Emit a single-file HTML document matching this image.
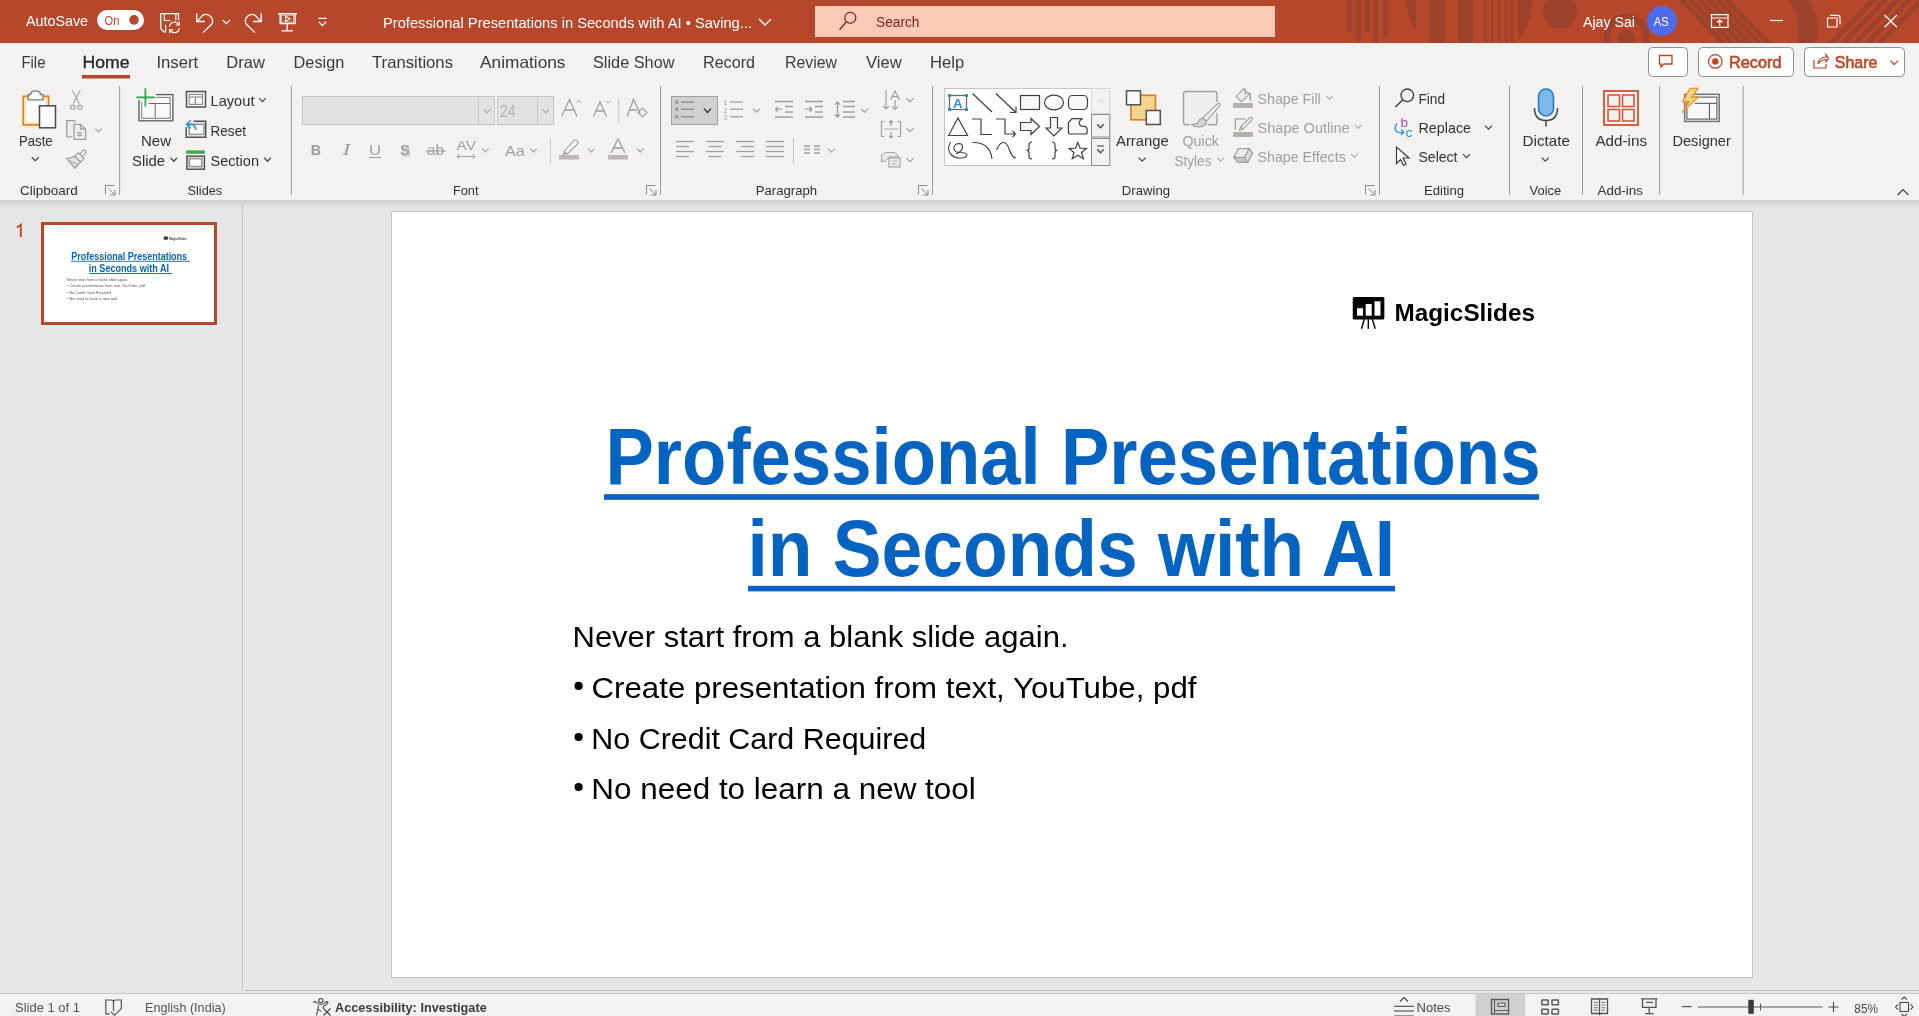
<!DOCTYPE html>
<html><head><meta charset="utf-8"><style>
html,body{margin:0;padding:0;width:1919px;height:1016px;overflow:hidden;background:#E6E6E6;}
svg{display:block;font-family:"Liberation Sans", sans-serif;will-change:transform;}
</style></head><body>
<svg width="1919" height="1016" viewBox="0 0 1919 1016">
<rect x="0" y="0" width="1919" height="1016" fill="#E6E6E6" stroke="none" stroke-width="1" rx="0"/>
<rect x="0" y="0" width="1919" height="43" fill="#B7472A" stroke="none" stroke-width="1" rx="0"/>
<rect x="0" y="43" width="1919" height="157" fill="#F3F2F1" stroke="none" stroke-width="1" rx="0"/>
<defs><linearGradient id="sh" x1="0" y1="0" x2="0" y2="1"><stop offset="0" stop-color="#CDCDCD"/><stop offset="0.5" stop-color="#DCDCDC"/><stop offset="1" stop-color="#E6E6E6"/></linearGradient></defs>
<rect x="0" y="200" width="1919" height="10" fill="url(#sh)" stroke="none" stroke-width="1" rx="0"/>
<rect x="0" y="993" width="1919" height="23" fill="#F3F2F1" stroke="none" stroke-width="1" rx="0"/>
<line x1="0" y1="993.5" x2="1919" y2="993.5" stroke="#C6C6C6" stroke-width="1"/>
<line x1="245" y1="990.5" x2="1919" y2="990.5" stroke="#BEBEBE" stroke-width="1"/>
<line x1="242.5" y1="203" x2="242.5" y2="990" stroke="#C8C8C8" stroke-width="1"/>
<rect x="1347" y="0" width="5" height="32" fill="#9E432B" stroke="none" stroke-width="1" rx="0"/>
<rect x="1356" y="0" width="5" height="41" fill="#9E432B" stroke="none" stroke-width="1" rx="0"/>
<rect x="1365" y="0" width="5" height="32" fill="#9E432B" stroke="none" stroke-width="1" rx="0"/>
<rect x="1373" y="0" width="5" height="43" fill="#9E432B" stroke="none" stroke-width="1" rx="0"/>
<rect x="1383" y="0" width="5" height="37" fill="#9E432B" stroke="none" stroke-width="1" rx="0"/>
<path d="M1405 0 L1416 0 L1416 30 Q1407 15 1405 0 Z" fill="#9E432B" stroke="none" stroke-width="1"/>
<rect x="1429" y="0" width="16" height="43" fill="#9E432B" stroke="none" stroke-width="1" rx="0"/>
<rect x="1458" y="0" width="15" height="43" fill="#9E432B" stroke="none" stroke-width="1" rx="0"/>
<rect x="1484" y="0" width="2.5" height="43" fill="#9E432B" stroke="none" stroke-width="1" rx="0"/>
<rect x="1491" y="0" width="2.5" height="43" fill="#9E432B" stroke="none" stroke-width="1" rx="0"/>
<rect x="1498" y="0" width="2.5" height="43" fill="#9E432B" stroke="none" stroke-width="1" rx="0"/>
<rect x="1505" y="0" width="2.5" height="43" fill="#9E432B" stroke="none" stroke-width="1" rx="0"/>
<rect x="1511" y="0" width="2.5" height="43" fill="#9E432B" stroke="none" stroke-width="1" rx="0"/>
<path d="M1518 0 L1533 0 Q1530 25 1518 40 Z" fill="#9E432B" stroke="none" stroke-width="1"/>
<circle cx="1560" cy="11" r="17.5" fill="#9E432B" stroke="none" stroke-width="1"/>
<g fill="none" stroke="#9E432B">
<circle cx="1626.5" cy="36.5" r="19.8" stroke-width="6.5"/><circle cx="1626.5" cy="38.5" r="8.9" fill="#9E432B" stroke="none"/>
<path d="M1793 -10 Q1820 25 1800 60" stroke-width="18"/>
</g>
<g stroke="#9E432B" stroke-width="5">
<line x1="1680" y1="-2" x2="1725" y2="45"/>
<line x1="1689" y1="-2" x2="1734" y2="45"/>
<line x1="1698" y1="-2" x2="1743" y2="45"/>
<line x1="1707" y1="-2" x2="1752" y2="45"/>
<line x1="1716" y1="-2" x2="1761" y2="45"/>
<line x1="1725" y1="-2" x2="1770" y2="45"/>
<line x1="1875" y1="-2" x2="1830" y2="45"/>
<line x1="1887" y1="-2" x2="1842" y2="45"/>
<line x1="1899" y1="-2" x2="1854" y2="45"/>
<line x1="1911" y1="-2" x2="1866" y2="45"/>
<line x1="1923" y1="-2" x2="1878" y2="45"/>
</g>
<rect x="0" y="43" width="1919" height="157" fill="#F3F2F1" stroke="none" stroke-width="1" rx="0"/>
<text x="26" y="25.7" font-size="15" fill="#FFFFFF" font-weight="normal" text-anchor="start" textLength="62" lengthAdjust="spacingAndGlyphs">AutoSave</text>
<rect x="97" y="10" width="47" height="20" fill="#FFFFFF" stroke="none" stroke-width="1" rx="10"/>
<text x="104.5" y="24.8" font-size="12" fill="#B7472A" font-weight="normal" text-anchor="start" textLength="14.8" lengthAdjust="spacingAndGlyphs">On</text>
<circle cx="134" cy="19.9" r="4.8" fill="#B7472A" stroke="none" stroke-width="1"/>
<path d="M166 31.8 H163.8 L160.8 28.6 V13.6 H178.5 V20.2" fill="none" stroke="#FFFFFF" stroke-width="1.3"/>
<path d="M164.4 13.6 V20.5 H170.4 M175.8 13.6 V20.5 M165.6 24.7 V31.3" fill="none" stroke="#FFFFFF" stroke-width="1.2"/>
<path d="M169.6 26.5 A5 5 0 0 1 178.8 24.5 M179.2 28.3 A5 5 0 0 1 170 30.3" fill="none" stroke="#FFFFFF" stroke-width="1.2"/>
<path d="M179.2 21.5 V25 H175.7 M169.6 33.3 V29.8 H173.1" fill="none" stroke="#FFFFFF" stroke-width="1.2"/>
<path d="M196.7 13.2 V21.5 H204.8" fill="none" stroke="#FFFFFF" stroke-width="1.3"/>
<path d="M197.5 21 L202.6 15.4 A6.6 6.6 0 0 1 211.8 24 L202.9 32.6" fill="none" stroke="#FFFFFF" stroke-width="1.3"/>
<path d="M222.65 19.9 L226.3 23.6 L229.95000000000002 19.9" fill="none" stroke="#FFFFFF" stroke-width="1.2"/>
<path d="M261.2 13.2 V21.5 H253.1" fill="none" stroke="#FFFFFF" stroke-width="1.3"/>
<path d="M260.4 21 L255.3 15.4 A6.6 6.6 0 0 0 246.1 24 L255 32.6" fill="none" stroke="#FFFFFF" stroke-width="1.3"/>
<path d="M278.1 13.7 H296.9 M280.2 13.7 V23.5 H295.2 V13.7 M287.2 23.5 V30.9 M281.5 30.9 H293" fill="none" stroke="#FFFFFF" stroke-width="1.4"/>
<rect x="281.7" y="15.2" width="12" height="6.8" fill="none" stroke="#FFFFFF" stroke-width="0.6" rx="0"/>
<path d="M285.6 16.2 L290 18.8 L285.6 21.4 Z" fill="none" stroke="#FFFFFF" stroke-width="1.1"/>
<path d="M318 18.4 H326.8" fill="none" stroke="#FFFFFF" stroke-width="1.2"/>
<path d="M318.79999999999995 21.75 L322.4 25.65 L326.0 21.75" fill="none" stroke="#FFFFFF" stroke-width="1.2"/>
<text x="383" y="27.9" font-size="15.5" fill="#FFFFFF" font-weight="normal" text-anchor="start" textLength="369" lengthAdjust="spacingAndGlyphs">Professional Presentations in Seconds with AI  •  Saving...</text>
<path d="M759.0 19.0 L765 25.0 L771.0 19.0" fill="none" stroke="#FFFFFF" stroke-width="1.3"/>
<rect x="815" y="6" width="460" height="31" fill="#FCCAB6" stroke="none" stroke-width="1" rx="0"/>
<circle cx="850.3" cy="17.8" r="5.5" fill="none" stroke="#7A1F1A" stroke-width="1.2"/>
<line x1="846.2" y1="22" x2="839.5" y2="29.7" stroke="#7A1F1A" stroke-width="1.3"/>
<text x="876" y="27.3" font-size="15.5" fill="#7A1F1A" font-weight="normal" text-anchor="start" textLength="43.5" lengthAdjust="spacingAndGlyphs">Search</text>
<text x="1583" y="26.8" font-size="15.5" fill="#FFFFFF" font-weight="normal" text-anchor="start" textLength="52" lengthAdjust="spacingAndGlyphs">Ajay Sai</text>
<circle cx="1662" cy="21" r="15" fill="#4F6BED" stroke="none" stroke-width="1"/>
<text x="1653.8" y="25.6" font-size="12" fill="#FFFFFF" font-weight="normal" text-anchor="start" textLength="15" lengthAdjust="spacingAndGlyphs">AS</text>
<path d="M1711.5 14.6 H1728 V27.3 H1711.5 Z M1711.5 18 H1728 M1719.7 26 V20 M1717 22.5 L1719.7 20 L1722.5 22.5" fill="none" stroke="#FFFFFF" stroke-width="1.2"/>
<line x1="1770" y1="20.5" x2="1783" y2="20.5" stroke="#FFFFFF" stroke-width="1.2"/>
<path d="M1827.5 18 H1837 V27 H1827.5 Z M1830 15.3 H1837.5 Q1840 15.3 1840 18 V24.5" fill="none" stroke="#FFFFFF" stroke-width="1.2"/>
<path d="M1884.5 15 L1897 27.3 M1897 15 L1884.5 27.3" fill="none" stroke="#FFFFFF" stroke-width="1.3"/>
<text x="21.4" y="67.6" font-size="16.5" fill="#3B3A39" font-weight="normal" text-anchor="start" textLength="24.1" lengthAdjust="spacingAndGlyphs">File</text>
<text x="82.5" y="67.6" font-size="16.5" fill="#262626" font-weight="normal" text-anchor="start" textLength="47" lengthAdjust="spacingAndGlyphs" stroke="#262626" stroke-width="0.3">Home</text>
<text x="156.4" y="67.6" font-size="16.5" fill="#3B3A39" font-weight="normal" text-anchor="start" textLength="41.9" lengthAdjust="spacingAndGlyphs">Insert</text>
<text x="226.2" y="67.6" font-size="16.5" fill="#3B3A39" font-weight="normal" text-anchor="start" textLength="38.7" lengthAdjust="spacingAndGlyphs">Draw</text>
<text x="293.6" y="67.6" font-size="16.5" fill="#3B3A39" font-weight="normal" text-anchor="start" textLength="50.7" lengthAdjust="spacingAndGlyphs">Design</text>
<text x="372" y="67.6" font-size="16.5" fill="#3B3A39" font-weight="normal" text-anchor="start" textLength="81" lengthAdjust="spacingAndGlyphs">Transitions</text>
<text x="480" y="67.6" font-size="16.5" fill="#3B3A39" font-weight="normal" text-anchor="start" textLength="85.5" lengthAdjust="spacingAndGlyphs">Animations</text>
<text x="593" y="67.6" font-size="16.5" fill="#3B3A39" font-weight="normal" text-anchor="start" textLength="81.5" lengthAdjust="spacingAndGlyphs">Slide Show</text>
<text x="703" y="67.6" font-size="16.5" fill="#3B3A39" font-weight="normal" text-anchor="start" textLength="52" lengthAdjust="spacingAndGlyphs">Record</text>
<text x="785" y="67.6" font-size="16.5" fill="#3B3A39" font-weight="normal" text-anchor="start" textLength="52" lengthAdjust="spacingAndGlyphs">Review</text>
<text x="866" y="67.6" font-size="16.5" fill="#3B3A39" font-weight="normal" text-anchor="start" textLength="35.8" lengthAdjust="spacingAndGlyphs">View</text>
<text x="930" y="67.6" font-size="16.5" fill="#3B3A39" font-weight="normal" text-anchor="start" textLength="34.2" lengthAdjust="spacingAndGlyphs">Help</text>
<rect x="82" y="75" width="48" height="3.5" fill="#B7472A" stroke="none" stroke-width="1" rx="0"/>
<rect x="1648.5" y="47.5" width="39" height="29" fill="#FFFFFF" stroke="#8F8F8F" stroke-width="1" rx="4"/>
<path d="M1659.5 55.5 H1672 V64 H1664 L1661 67 V64 H1659.5 Z" fill="none" stroke="#C0431F" stroke-width="1.3"/>
<rect x="1698.5" y="47.5" width="95" height="29" fill="#FFFFFF" stroke="#8F8F8F" stroke-width="1" rx="4"/>
<circle cx="1715.3" cy="61.4" r="6.8" fill="none" stroke="#C0431F" stroke-width="1.2"/>
<circle cx="1715.3" cy="61.4" r="3.2" fill="#C0431F" stroke="none" stroke-width="1"/>
<text x="1729" y="67.6" font-size="17" fill="#C0431F" font-weight="normal" text-anchor="start" textLength="52.5" lengthAdjust="spacingAndGlyphs" stroke="#C0431F" stroke-width="0.6">Record</text>
<rect x="1804.5" y="47.5" width="100" height="29" fill="#FFFFFF" stroke="#8F8F8F" stroke-width="1" rx="4"/>
<path d="M1814 60 V68 H1826 V64 M1818 64 Q1819 57 1826 57 V54.5 L1828.5 58.5 L1826 62 V59.5 Q1821 59.5 1818 64" fill="none" stroke="#C0431F" stroke-width="1.2"/>
<text x="1834.8" y="67.6" font-size="17" fill="#C0431F" font-weight="normal" text-anchor="start" textLength="42.5" lengthAdjust="spacingAndGlyphs" stroke="#C0431F" stroke-width="0.6">Share</text>
<path d="M1890.45 60.6 L1894.2 64.6 L1897.95 60.6" fill="none" stroke="#C0431F" stroke-width="1.3"/>
<rect x="42.5" y="223.5" width="173" height="100" fill="#FFFFFF" stroke="#B7472A" stroke-width="3" rx="0"/>
<path d="M17 227.6 L20.8 224.8 V237" fill="none" stroke="#C4462A" stroke-width="1.9"/>
<rect x="391.5" y="211.5" width="1361" height="766" fill="#FFFFFF" stroke="#C6C6C6" stroke-width="1" rx="0"/>
<text x="605.5" y="484.2" font-size="79" fill="#0563C1" font-weight="bold" text-anchor="start" textLength="935" lengthAdjust="spacingAndGlyphs">Professional Presentations</text>
<rect x="604" y="494.2" width="935" height="5.6" fill="#0563C1" stroke="none" stroke-width="1" rx="0"/>
<text x="747.5" y="576" font-size="79" fill="#0563C1" font-weight="bold" text-anchor="start" textLength="647.5" lengthAdjust="spacingAndGlyphs">in Seconds with AI</text>
<rect x="748" y="585.8" width="647" height="5.6" fill="#0563C1" stroke="none" stroke-width="1" rx="0"/>
<text x="572.5" y="646.9" font-size="30" fill="#000000" font-weight="normal" text-anchor="start" textLength="496" lengthAdjust="spacingAndGlyphs">Never start from a blank slide again.</text>
<text x="591.5" y="697.9" font-size="30" fill="#000000" font-weight="normal" text-anchor="start" textLength="605" lengthAdjust="spacingAndGlyphs">Create presentation from text, YouTube, pdf</text>
<text x="591.3" y="748.8" font-size="30" fill="#000000" font-weight="normal" text-anchor="start" textLength="335" lengthAdjust="spacingAndGlyphs">No Credit Card Required</text>
<text x="591.3" y="798.7" font-size="30" fill="#000000" font-weight="normal" text-anchor="start" textLength="384.5" lengthAdjust="spacingAndGlyphs">No need to learn a new tool</text>
<circle cx="578.6" cy="685.9" r="4.1" fill="#000000" stroke="none" stroke-width="1"/>
<circle cx="578.6" cy="737" r="4.1" fill="#000000" stroke="none" stroke-width="1"/>
<circle cx="578.6" cy="787" r="4.1" fill="#000000" stroke="none" stroke-width="1"/>
<rect x="1352.75" y="296.9" width="31.6" height="22.5" fill="#000000" stroke="none" stroke-width="1" rx="1.5"/>
<rect x="1357" y="308.2" width="6" height="7.5" fill="#FFFFFF" stroke="none" stroke-width="1" rx="0"/>
<rect x="1365.7" y="304" width="6" height="11.7" fill="#FFFFFF" stroke="none" stroke-width="1" rx="0"/>
<rect x="1374.5" y="301.3" width="6" height="14.4" fill="#FFFFFF" stroke="none" stroke-width="1" rx="0"/>
<path d="M1364.3 319 L1361.5 328.7 M1368.3 319 V328.7 M1372.2 319 L1375.2 328.7" fill="none" stroke="#000000" stroke-width="1.4"/>
<text x="1394.5" y="321.3" font-size="24" fill="#000000" font-weight="bold" text-anchor="start" textLength="140.5" lengthAdjust="spacingAndGlyphs">MagicSlides</text>
<text x="71.3" y="259.8" font-size="10" fill="#0563C1" font-weight="bold" text-anchor="start" textLength="115.8" lengthAdjust="spacingAndGlyphs">Professional Presentations</text>
<rect x="71" y="260.8" width="119" height="0.9" fill="#0563C1" stroke="none" stroke-width="1" rx="0"/>
<text x="88.8" y="271.7" font-size="10" fill="#0563C1" font-weight="bold" text-anchor="start" textLength="80.2" lengthAdjust="spacingAndGlyphs">in Seconds with AI</text>
<rect x="89" y="273" width="83" height="0.9" fill="#0563C1" stroke="none" stroke-width="1" rx="0"/>
<text x="67" y="281" font-size="4" fill="#555555" font-weight="normal" text-anchor="start" textLength="61" lengthAdjust="spacingAndGlyphs">Never start from a blank slide again.</text>
<text x="67" y="287" font-size="4" fill="#555555" font-weight="normal" text-anchor="start" textLength="78" lengthAdjust="spacingAndGlyphs">• Create presentation from text, YouTube, pdf</text>
<text x="67" y="294" font-size="4" fill="#555555" font-weight="normal" text-anchor="start" textLength="44" lengthAdjust="spacingAndGlyphs">• No Credit Card Required</text>
<text x="67" y="300" font-size="4" fill="#555555" font-weight="normal" text-anchor="start" textLength="50" lengthAdjust="spacingAndGlyphs">• No need to learn a new tool</text>
<rect x="163.8" y="236.5" width="4" height="3.2" fill="#333" stroke="none" stroke-width="1" rx="0"/>
<text x="169" y="240.3" font-size="4.2" fill="#444" font-weight="bold" text-anchor="start" textLength="18" lengthAdjust="spacingAndGlyphs">MagicSlides</text>
<line x1="119.6" y1="86" x2="119.6" y2="195" stroke="#9C9A98" stroke-width="1"/>
<line x1="291.4" y1="86" x2="291.4" y2="195" stroke="#9C9A98" stroke-width="1"/>
<line x1="660.5" y1="86" x2="660.5" y2="195" stroke="#9C9A98" stroke-width="1"/>
<line x1="932.5" y1="86" x2="932.5" y2="195" stroke="#9C9A98" stroke-width="1"/>
<line x1="1379.5" y1="86" x2="1379.5" y2="195" stroke="#9C9A98" stroke-width="1"/>
<line x1="1509.5" y1="86" x2="1509.5" y2="195" stroke="#9C9A98" stroke-width="1"/>
<line x1="1582.5" y1="86" x2="1582.5" y2="195" stroke="#9C9A98" stroke-width="1"/>
<line x1="1659.6" y1="86" x2="1659.6" y2="195" stroke="#9C9A98" stroke-width="1"/>
<line x1="1743.2" y1="86" x2="1743.2" y2="195" stroke="#9C9A98" stroke-width="1"/>
<text x="19.9" y="194.8" font-size="13.2" fill="#323130" font-weight="normal" text-anchor="start" textLength="57.9" lengthAdjust="spacingAndGlyphs">Clipboard</text>
<text x="187.5" y="194.8" font-size="13.2" fill="#323130" font-weight="normal" text-anchor="start" textLength="34.7" lengthAdjust="spacingAndGlyphs">Slides</text>
<text x="452.9" y="194.8" font-size="13.2" fill="#323130" font-weight="normal" text-anchor="start" textLength="25.6" lengthAdjust="spacingAndGlyphs">Font</text>
<text x="755.8" y="194.8" font-size="13.2" fill="#323130" font-weight="normal" text-anchor="start" textLength="61.2" lengthAdjust="spacingAndGlyphs">Paragraph</text>
<text x="1121.8" y="194.8" font-size="13.2" fill="#323130" font-weight="normal" text-anchor="start" textLength="48.2" lengthAdjust="spacingAndGlyphs">Drawing</text>
<text x="1424.0" y="194.8" font-size="13.2" fill="#323130" font-weight="normal" text-anchor="start" textLength="40.0" lengthAdjust="spacingAndGlyphs">Editing</text>
<text x="1529.5" y="194.8" font-size="13.2" fill="#323130" font-weight="normal" text-anchor="start" textLength="31.7" lengthAdjust="spacingAndGlyphs">Voice</text>
<text x="1597.5" y="194.8" font-size="13.2" fill="#323130" font-weight="normal" text-anchor="start" textLength="45.4" lengthAdjust="spacingAndGlyphs">Add-ins</text>
<path d="M105.5 194.5 V185.5 H114.5 M108.5 188.5 L115.0 195.0 M110.0 195.0 H115.0 V190.0" fill="none" stroke="#8A8886" stroke-width="1"/>
<path d="M646.5 194.5 V185.5 H655.5 M649.5 188.5 L656.0 195.0 M651.0 195.0 H656.0 V190.0" fill="none" stroke="#8A8886" stroke-width="1"/>
<path d="M918.5 194.5 V185.5 H927.5 M921.5 188.5 L928.0 195.0 M923.0 195.0 H928.0 V190.0" fill="none" stroke="#8A8886" stroke-width="1"/>
<path d="M1365.5 194.5 V185.5 H1374.5 M1368.5 188.5 L1375.0 195.0 M1370.0 195.0 H1375.0 V190.0" fill="none" stroke="#8A8886" stroke-width="1"/>
<path d="M1897.5 195 L1903 189.5 L1908.5 195" fill="none" stroke="#444" stroke-width="1.2"/>
<rect x="23.2" y="96.3" width="25.3" height="28.6" fill="#FAFAFA" stroke="#E8841F" stroke-width="1.8" rx="0"/>
<rect x="25" y="98.1" width="21.7" height="25" fill="none" stroke="#F8D98F" stroke-width="1.2" rx="0"/>
<path d="M28.2 94.5 V99.8 H43 V94.5 H40.5 Q40.5 90.8 35.6 90.8 Q30.7 90.8 30.7 94.5 Z" fill="#FAFAFA" stroke="#7A7A7A" stroke-width="1.3"/>
<rect x="39.5" y="105.8" width="16" height="22" fill="#FAFAFA" stroke="#4A4A4A" stroke-width="1.5" rx="0"/>
<text x="19" y="145.7" font-size="14.8" fill="#323130" font-weight="normal" text-anchor="start" textLength="33.7" lengthAdjust="spacingAndGlyphs">Paste</text>
<path d="M31.799999999999997 157.25 L35.3 160.75 L38.8 157.25" fill="none" stroke="#444" stroke-width="1.2"/>
<path d="M72.5 90.2 L79.3 103.5 M80.2 90.2 L73.4 103.5" fill="none" stroke="#A19F9D" stroke-width="1.1"/>
<circle cx="72.8" cy="107.3" r="2.2" fill="none" stroke="#A19F9D" stroke-width="1.1"/>
<circle cx="79.9" cy="107.3" r="2.2" fill="none" stroke="#A19F9D" stroke-width="1.1"/>
<path d="M72.2 136.9 H66.8 V120.6 H74 L75.8 122.4" fill="#EDEDED" stroke="#A19F9D" stroke-width="1.3"/>
<path d="M74 124.3 H80.5 L85.6 129 V139.3 H74 Z M80.5 124.3 V129 H85.6 M77.2 133 H81.9 M77.2 135.5 H81.9" fill="#EDEDED" stroke="#A19F9D" stroke-width="1.3"/>
<path d="M95.25 128.65 L98.5 131.95000000000002 L101.75 128.65" fill="none" stroke="#A19F9D" stroke-width="1.1"/>
<path d="M82.8 150.6 Q84.6 149.4 85.8 150.8 Q86.8 152.3 85.2 153.6 L81.6 157.2 L79.3 154.9 Z" fill="#EDEDED" stroke="#A19F9D" stroke-width="1.2"/>
<path d="M74.9 156.4 L78.4 152.9 L84.1 158.6 L80.6 162.1 Z" fill="#EDEDED" stroke="#A19F9D" stroke-width="1.2"/>
<path d="M74.9 156.4 Q70.5 158.3 66.6 158.6 L74.9 168 L80.6 162.1 Z" fill="#E3E3E3" stroke="#A19F9D" stroke-width="1.2"/>
<path d="M68.3 160.4 L78.2 164.5" fill="none" stroke="#A19F9D" stroke-width="1"/>
<rect x="139" y="94.6" width="33.9" height="26.2" fill="#FAFAFA" stroke="#5A5A5A" stroke-width="1.3" rx="0"/>
<rect x="141.7" y="97.4" width="28.5" height="20.9" fill="none" stroke="#7A7A7A" stroke-width="1" rx="0"/>
<path d="M148.3 103.5 H170 M155.2 103.5 V118.3" fill="none" stroke="#6A6A6A" stroke-width="1"/>
<rect x="133.5" y="86" width="22.5" height="17" fill="#F3F2F1" stroke="none" stroke-width="1" rx="0"/>
<rect x="138.5" y="100" width="10" height="6" fill="#FAFAFA" stroke="none" stroke-width="1" rx="0"/>
<line x1="139" y1="100" x2="139" y2="106" stroke="#5A5A5A" stroke-width="1.3"/>
<line x1="141.7" y1="102" x2="141.7" y2="106" stroke="#7A7A7A" stroke-width="1"/>
<path d="M145.4 88.3 V106.5 M136.3 97.4 H154.8" fill="none" stroke="#2EA44F" stroke-width="1.7"/>
<text x="141" y="145.7" font-size="14.8" fill="#323130" font-weight="normal" text-anchor="start" textLength="30" lengthAdjust="spacingAndGlyphs">New</text>
<text x="132" y="165.8" font-size="14.8" fill="#323130" font-weight="normal" text-anchor="start" textLength="33" lengthAdjust="spacingAndGlyphs">Slide</text>
<path d="M170.55 157.75 L173.8 161.25 L177.05 157.75" fill="none" stroke="#444" stroke-width="1.2"/>
<rect x="186.5" y="91.5" width="19" height="15.5" fill="#F8F8F8" stroke="#505050" stroke-width="1.5" rx="0"/>
<path d="M189.2 94.4 H202.5 V104.4 H189.2 Z M189.2 97 H202.5 M195.3 97 V104.4" fill="none" stroke="#7A7A7A" stroke-width="1"/>
<text x="210.5" y="106.1" font-size="14.8" fill="#323130" font-weight="normal" text-anchor="start" textLength="44" lengthAdjust="spacingAndGlyphs">Layout</text>
<path d="M259.25 98.05 L262.5 101.55 L265.75 98.05" fill="none" stroke="#444" stroke-width="1.2"/>
<path d="M193.6 121.2 H205.7 V137.2 H186.2 V127" fill="none" stroke="#505050" stroke-width="1.5"/>
<rect x="189.2" y="124.2" width="14.8" height="10.2" fill="#FAFAFA" stroke="#9A9A9A" stroke-width="1.6" rx="0"/>
<path d="M190.7 120.3 L186.6 124.4 L190.7 128.5 M187.2 124.4 H191.5 Q195.7 124.4 195.7 130" fill="none" stroke="#2B8FD8" stroke-width="1.5"/>
<text x="210.5" y="136.2" font-size="14.8" fill="#323130" font-weight="normal" text-anchor="start" textLength="35.5" lengthAdjust="spacingAndGlyphs">Reset</text>
<rect x="186.2" y="150.4" width="18.7" height="3.4" fill="#3DAA4F" stroke="none" stroke-width="1" rx="0"/>
<rect x="186.9" y="156.2" width="17.5" height="13" fill="#FAFAFA" stroke="#454545" stroke-width="1.4" rx="0"/>
<rect x="189.3" y="158.6" width="12.5" height="8" fill="#FFFFFF" stroke="#9A9A9A" stroke-width="1.8" rx="0"/>
<text x="210.5" y="165.8" font-size="14.8" fill="#323130" font-weight="normal" text-anchor="start" textLength="48.5" lengthAdjust="spacingAndGlyphs">Section</text>
<path d="M264.25 157.75 L267.5 161.25 L270.75 157.75" fill="none" stroke="#444" stroke-width="1.2"/>
<rect x="302.5" y="96.5" width="192" height="28" fill="#E3E2E0" stroke="#C8C6C4" stroke-width="1" rx="0"/>
<line x1="478.5" y1="97" x2="478.5" y2="124" stroke="#C8C6C4" stroke-width="1"/>
<path d="M483.75 109.25 L487 112.75 L490.25 109.25" fill="none" stroke="#A19F9D" stroke-width="1.1"/>
<rect x="497.5" y="96.5" width="56" height="28" fill="#E3E2E0" stroke="#C8C6C4" stroke-width="1" rx="0"/>
<line x1="537.5" y1="97" x2="537.5" y2="124" stroke="#C8C6C4" stroke-width="1"/>
<path d="M542.55 109.25 L545.8 112.75 L549.05 109.25" fill="none" stroke="#A19F9D" stroke-width="1.1"/>
<text x="500" y="116.6" font-size="16" fill="#B3B0AD" font-weight="normal" text-anchor="start" textLength="15.7" lengthAdjust="spacingAndGlyphs">24</text>
<path d="M561.5 116.5 L569.5 99.5 L577 116.5 M564.5 110 H574.5" fill="none" stroke="#A19F9D" stroke-width="1.3"/>
<path d="M576.5 103 L579 100.5 L581.5 103" fill="none" stroke="#A19F9D" stroke-width="1"/>
<path d="M593.5 116.5 L600 102 L606.5 116.5 M596 111 H604" fill="none" stroke="#A19F9D" stroke-width="1.3"/>
<path d="M605.5 100.5 L608 103 L610.5 100.5" fill="none" stroke="#A19F9D" stroke-width="1"/>
<line x1="618.7" y1="97.5" x2="618.7" y2="123.5" stroke="#C8C6C4" stroke-width="1"/>
<path d="M627 116.5 L633.5 99.5 L640 113 M629.5 110 H637" fill="none" stroke="#A19F9D" stroke-width="1.3"/>
<path d="M638 112.5 L642.5 108 L647 112.5 L642.5 117 Z" fill="none" stroke="#A19F9D" stroke-width="1.2"/>
<text x="310.8" y="155.3" font-size="15.5" fill="#9A9896" font-weight="bold" text-anchor="start" textLength="10.2" lengthAdjust="spacingAndGlyphs">B</text>
<text x="342.5" y="155.3" font-size="16" fill="#A19F9D" font-weight="normal" text-anchor="start" textLength="8" lengthAdjust="spacingAndGlyphs" font-style="italic" font-family="Liberation Serif, serif">I</text>
<text x="369" y="155.3" font-size="15" fill="#A19F9D" font-weight="normal" text-anchor="start" textLength="12" lengthAdjust="spacingAndGlyphs">U</text>
<line x1="369" y1="157.5" x2="381" y2="157.5" stroke="#A19F9D" stroke-width="1.2"/>
<text x="401" y="156.5" font-size="15.5" fill="#D2D0CE" font-weight="bold" text-anchor="start" textLength="10" lengthAdjust="spacingAndGlyphs">S</text>
<text x="400" y="155.3" font-size="15.5" fill="#A19F9D" font-weight="bold" text-anchor="start" textLength="10" lengthAdjust="spacingAndGlyphs">S</text>
<text x="427" y="155.3" font-size="15" fill="#A19F9D" font-weight="normal" text-anchor="start" textLength="17" lengthAdjust="spacingAndGlyphs">ab</text>
<line x1="425.5" y1="151" x2="446" y2="151" stroke="#A19F9D" stroke-width="1.1"/>
<text x="456.5" y="150" font-size="13" fill="#A19F9D" font-weight="normal" text-anchor="start" textLength="19.5" lengthAdjust="spacingAndGlyphs">AV</text>
<path d="M457 156.5 H475 M459.5 154 L457 156.5 L459.5 159 M472.5 154 L475 156.5 L472.5 159" fill="none" stroke="#A19F9D" stroke-width="1"/>
<path d="M482.05 148.65 L485.3 151.95000000000002 L488.55 148.65" fill="none" stroke="#A19F9D" stroke-width="1.1"/>
<text x="505" y="156" font-size="15" fill="#A19F9D" font-weight="normal" text-anchor="start" textLength="19.7" lengthAdjust="spacingAndGlyphs">Aa</text>
<path d="M530.25 148.65 L533.5 151.95000000000002 L536.75 148.65" fill="none" stroke="#A19F9D" stroke-width="1.1"/>
<line x1="550.4" y1="137.5" x2="550.4" y2="163" stroke="#C8C6C4" stroke-width="1"/>
<rect x="559" y="155" width="20" height="4.5" fill="#BAB7B4" stroke="none" stroke-width="1" rx="0"/>
<path d="M564 151.5 L573.5 141 Q575.5 139 577.3 140.8 Q579 142.6 577 144.5 L567 154 Z" fill="#FFFFFF" stroke="#A19F9D" stroke-width="1.1"/>
<path d="M564 151.5 L567 154 L562.5 155 Z" fill="#A19F9D" stroke="none" stroke-width="1"/>
<path d="M588.05 148.65 L591.3 151.95000000000002 L594.55 148.65" fill="none" stroke="#A19F9D" stroke-width="1.1"/>
<rect x="608" y="155" width="20" height="4.5" fill="#BAB7B4" stroke="none" stroke-width="1" rx="0"/>
<path d="M611 153 L618 139 L625 153 M613.5 148 H622.5" fill="none" stroke="#A19F9D" stroke-width="1.3"/>
<path d="M637.05 148.65 L640.3 151.95000000000002 L643.55 148.65" fill="none" stroke="#A19F9D" stroke-width="1.1"/>
<rect x="671.5" y="96.5" width="46" height="28" fill="#D2D0CE" stroke="#A19F9D" stroke-width="1" rx="0"/>
<rect x="675" y="100.3" width="3.5" height="3.5" fill="#A19F9D" stroke="none" stroke-width="1" rx="0"/>
<line x1="681" y1="102" x2="694" y2="102" stroke="#8A8886" stroke-width="1.3"/>
<rect x="675" y="107.5" width="3.5" height="3.5" fill="#A19F9D" stroke="none" stroke-width="1" rx="0"/>
<line x1="681" y1="109.2" x2="694" y2="109.2" stroke="#8A8886" stroke-width="1.3"/>
<rect x="675" y="115.1" width="3.5" height="3.5" fill="#A19F9D" stroke="none" stroke-width="1" rx="0"/>
<line x1="681" y1="116.8" x2="694" y2="116.8" stroke="#8A8886" stroke-width="1.3"/>
<path d="M704.0 108.6 L707.5 112.4 L711.0 108.6" fill="none" stroke="#323130" stroke-width="1.4"/>
<text x="723.8" y="105.3" font-size="7" fill="#A19F9D" font-weight="normal" text-anchor="start" textLength="3.5" lengthAdjust="spacingAndGlyphs">1</text>
<line x1="730" y1="102" x2="743" y2="102" stroke="#A19F9D" stroke-width="1.3"/>
<text x="723.8" y="112.5" font-size="7" fill="#A19F9D" font-weight="normal" text-anchor="start" textLength="3.5" lengthAdjust="spacingAndGlyphs">2</text>
<line x1="730" y1="109.2" x2="743" y2="109.2" stroke="#A19F9D" stroke-width="1.3"/>
<text x="723.8" y="120.1" font-size="7" fill="#A19F9D" font-weight="normal" text-anchor="start" textLength="3.5" lengthAdjust="spacingAndGlyphs">3</text>
<line x1="730" y1="116.8" x2="743" y2="116.8" stroke="#A19F9D" stroke-width="1.3"/>
<path d="M753.0 108.75 L756.5 112.25 L760.0 108.75" fill="none" stroke="#A19F9D" stroke-width="1.1"/>
<path d="M775 101.5 H793 M785 106.5 H793 M785 112 H793 M775 117 H793 M782 109.2 H775.5 M778 106.7 L775.5 109.2 L778 111.7" fill="none" stroke="#A19F9D" stroke-width="1.3"/>
<path d="M805 101.5 H823 M815 106.5 H823 M815 112 H823 M805 117 H823 M805 109.2 H812 M809.5 106.7 L812 109.2 L809.5 111.7" fill="none" stroke="#A19F9D" stroke-width="1.3"/>
<path d="M843 101.5 H855 M843 106.5 H855 M843 112 H855 M843 117 H855 M837.5 102 V117 M835 104.5 L837.5 102 L840 104.5 M835 114.5 L837.5 117 L840 114.5" fill="none" stroke="#A19F9D" stroke-width="1.3"/>
<path d="M861.0 108.75 L864.5 112.25 L868.0 108.75" fill="none" stroke="#A19F9D" stroke-width="1.1"/>
<path d="M886 90 V109 M883 106 L886 109 L889 106 M895 100 V109.5 M892 106.5 L895 109.5 L898 106.5 M890.5 99.7 L895 91 L899.5 99.7 M892 96.7 H898" fill="none" stroke="#A19F9D" stroke-width="1.2"/>
<path d="M906.5 98.25 L910 101.75 L913.5 98.25" fill="none" stroke="#A19F9D" stroke-width="1.1"/>
<path d="M884.5 121.5 H881.5 V136.5 H884.5 M897.5 121.5 H900.5 V136.5 H897.5 M884 129 H898 M891 120.5 V126 M889 122.5 L891 120.5 L893 122.5 M891 132 V138 M889 136 L891 138 L893 136" fill="none" stroke="#A19F9D" stroke-width="1.2"/>
<path d="M906.5 128.25 L910 131.75 L913.5 128.25" fill="none" stroke="#A19F9D" stroke-width="1.1"/>
<path d="M881.5 155 L885.5 152.5 H895 L899 157 H889 L885 161.5 H881.5 Z" fill="#E8E8E8" stroke="#A19F9D" stroke-width="1"/>
<rect x="889" y="158" width="11" height="9" fill="#F0F0F0" stroke="#A19F9D" stroke-width="1.1" rx="0"/>
<path d="M891.5 161 H897.5 M891.5 164 H897.5" fill="none" stroke="#A19F9D" stroke-width="0.8"/>
<path d="M906.5 158.25 L910 161.75 L913.5 158.25" fill="none" stroke="#A19F9D" stroke-width="1.1"/>
<line x1="676" y1="141.5" x2="694" y2="141.5" stroke="#A19F9D" stroke-width="1.3"/>
<line x1="676" y1="146.5" x2="689" y2="146.5" stroke="#A19F9D" stroke-width="1.3"/>
<line x1="676" y1="151.5" x2="694" y2="151.5" stroke="#A19F9D" stroke-width="1.3"/>
<line x1="676" y1="156.5" x2="689" y2="156.5" stroke="#A19F9D" stroke-width="1.3"/>
<line x1="706.0" y1="141.5" x2="724.0" y2="141.5" stroke="#A19F9D" stroke-width="1.3"/>
<line x1="708.5" y1="146.5" x2="721.5" y2="146.5" stroke="#A19F9D" stroke-width="1.3"/>
<line x1="706.0" y1="151.5" x2="724.0" y2="151.5" stroke="#A19F9D" stroke-width="1.3"/>
<line x1="708.5" y1="156.5" x2="721.5" y2="156.5" stroke="#A19F9D" stroke-width="1.3"/>
<line x1="736" y1="141.5" x2="754" y2="141.5" stroke="#A19F9D" stroke-width="1.3"/>
<line x1="741" y1="146.5" x2="754" y2="146.5" stroke="#A19F9D" stroke-width="1.3"/>
<line x1="736" y1="151.5" x2="754" y2="151.5" stroke="#A19F9D" stroke-width="1.3"/>
<line x1="741" y1="156.5" x2="754" y2="156.5" stroke="#A19F9D" stroke-width="1.3"/>
<line x1="766" y1="141.5" x2="784" y2="141.5" stroke="#A19F9D" stroke-width="1.3"/>
<line x1="766" y1="146.5" x2="784" y2="146.5" stroke="#A19F9D" stroke-width="1.3"/>
<line x1="766" y1="151.5" x2="784" y2="151.5" stroke="#A19F9D" stroke-width="1.3"/>
<line x1="766" y1="156.5" x2="784" y2="156.5" stroke="#A19F9D" stroke-width="1.3"/>
<line x1="793.5" y1="137.5" x2="793.5" y2="164" stroke="#C8C6C4" stroke-width="1"/>
<path d="M804 146 H810 M804 149.5 H810 M804 153 H810 M814 146 H820 M814 149.5 H820 M814 153 H820" fill="none" stroke="#A19F9D" stroke-width="1.3"/>
<path d="M828.0 148.55 L831.5 152.05 L835.0 148.55" fill="none" stroke="#A19F9D" stroke-width="1.1"/>
<rect x="944.5" y="88.5" width="165" height="77" fill="#FFFFFF" stroke="#C8C6C4" stroke-width="1" rx="0"/>
<rect x="1091.5" y="88.5" width="18.3" height="25" fill="#F3F2F1" stroke="#D6D6D6" stroke-width="1" rx="0"/>
<path d="M1097.5 102.5 L1100.5 99.5 L1103.5 102.5" fill="none" stroke="#C8C6C4" stroke-width="1"/>
<rect x="1091.5" y="114.5" width="18.3" height="22.5" fill="#F3F2F1" stroke="#8A8A8A" stroke-width="1" rx="0"/>
<path d="M1097.25 124.25 L1100.5 127.75 L1103.75 124.25" fill="none" stroke="#444" stroke-width="1.2"/>
<rect x="1091.5" y="138.5" width="18.3" height="27" fill="#F3F2F1" stroke="#8A8A8A" stroke-width="1" rx="0"/>
<line x1="1097" y1="146" x2="1104" y2="146" stroke="#444" stroke-width="1"/>
<path d="M1097.25 149.25 L1100.5 152.75 L1103.75 149.25" fill="none" stroke="#444" stroke-width="1.2"/>
<rect x="949.5" y="95.5" width="17" height="14" fill="none" stroke="#6A6A6A" stroke-width="1.3" rx="0"/>
<rect x="948.0" y="94.0" width="3" height="3" fill="#2D8CDB" stroke="none" stroke-width="1" rx="0"/>
<rect x="965.0" y="94.0" width="3" height="3" fill="#2D8CDB" stroke="none" stroke-width="1" rx="0"/>
<rect x="948.0" y="108.0" width="3" height="3" fill="#2D8CDB" stroke="none" stroke-width="1" rx="0"/>
<rect x="965.0" y="108.0" width="3" height="3" fill="#2D8CDB" stroke="none" stroke-width="1" rx="0"/>
<text x="953" y="107.5" font-size="12.5" fill="#2D8CDB" font-weight="bold" text-anchor="start" textLength="9.5" lengthAdjust="spacingAndGlyphs">A</text>
<line x1="972.5" y1="93.5" x2="992" y2="112" stroke="#404040" stroke-width="1.2"/>
<path d="M996 93.5 L1016 112.5 M1010 112.5 H1016 V106.5" fill="none" stroke="#404040" stroke-width="1.2"/>
<rect x="1020.5" y="95.5" width="19" height="14" fill="#F7F7F7" stroke="#404040" stroke-width="1.2" rx="0"/>
<ellipse cx="1054" cy="102.5" rx="9.5" ry="7.3" fill="none" stroke="#404040" stroke-width="1.2"/>
<rect x="1068.5" y="95.5" width="19" height="14" fill="#F7F7F7" stroke="#404040" stroke-width="1.2" rx="4"/>
<path d="M948.5 135.5 L958 118 L967.5 135.5 Z" fill="none" stroke="#404040" stroke-width="1.2"/>
<path d="M972 119 H981 V134.5 H992" fill="none" stroke="#404040" stroke-width="1.2"/>
<path d="M996 119 H1005 V134 H1015.5 M1012.5 131 L1015.5 134 L1012.5 137" fill="none" stroke="#404040" stroke-width="1.2"/>
<path d="M1020.5 122.5 H1031 V118.5 L1039.5 126.5 L1031 134.5 V130.5 H1020.5 Z" fill="#F7F7F7" stroke="#404040" stroke-width="1.2"/>
<path d="M1050.5 117.5 H1057.5 V128 H1062 L1054 136 L1046 128 H1050.5 Z" fill="#F7F7F7" stroke="#404040" stroke-width="1.2"/>
<path d="M1070.4 134 Q1068.4 134 1068.4 132 V122.5 L1072.2 118.7 H1082.6 Q1078.8 120.5 1079.3 123.6 Q1080 126.4 1084 126.4 Q1087.2 126.6 1087.2 130 V132 Q1087.2 134 1085 134 Z" fill="#F7F7F7" stroke="#404040" stroke-width="1.2"/>
<path d="M950.5 142 Q946.5 150 951 154.5 Q955 158.5 961.5 158 Q967 157.5 967 155 Q966.5 152.5 960 152.5 Q954.5 152.5 954 148.5 Q954 144 958.5 143.5 Q963 143.5 962.5 147.5 Q962 151.5 956 154" fill="none" stroke="#404040" stroke-width="1.1"/>
<path d="M972.5 142.5 Q990 142 992 159" fill="none" stroke="#404040" stroke-width="1.2"/>
<path d="M996.5 150 Q999.5 142.5 1003.5 142.5 Q1007 142.5 1009.5 150 Q1012 157.5 1016 158" fill="none" stroke="#404040" stroke-width="1.2"/>
<path d="M1032 142 Q1029 142 1029 145 V148.5 Q1029 150.5 1026.5 150.5 Q1029 150.5 1029 152.5 V156 Q1029 159 1032 159" fill="none" stroke="#404040" stroke-width="1.2"/>
<path d="M1052 142 Q1055 142 1055 145 V148.5 Q1055 150.5 1057.5 150.5 Q1055 150.5 1055 152.5 V156 Q1055 159 1052 159" fill="none" stroke="#404040" stroke-width="1.2"/>
<path d="M1077.8 142.5 L1080.2 148.2 L1086.5 148.5 L1081.6 152.5 L1083.3 158.7 L1077.8 155.2 L1072.3 158.7 L1074 152.5 L1069.1 148.5 L1075.4 148.2 Z" fill="none" stroke="#404040" stroke-width="1.2"/>
<rect x="1131" y="95.3" width="24.5" height="24.5" fill="#F7D48E" stroke="#E07B24" stroke-width="1.6" rx="0"/>
<rect x="1126.5" y="90.8" width="14" height="14" fill="#F8F8F8" stroke="#505050" stroke-width="1.5" rx="0"/>
<rect x="1146.3" y="110.5" width="14" height="14" fill="#F8F8F8" stroke="#505050" stroke-width="1.5" rx="0"/>
<text x="1116" y="145.7" font-size="14.8" fill="#323130" font-weight="normal" text-anchor="start" textLength="52.7" lengthAdjust="spacingAndGlyphs">Arrange</text>
<path d="M1138.7 157.55 L1142.2 161.05 L1145.7 157.55" fill="none" stroke="#444" stroke-width="1.2"/>
<rect x="1183.5" y="91.5" width="33.5" height="33.2" fill="#EEEEEE" stroke="#9F9F9F" stroke-width="1.4" rx="2.5"/>
<rect x="1214" y="102" width="5" height="11" fill="#F3F2F1" stroke="none" stroke-width="1" rx="0"/>
<rect x="1189.5" y="122" width="18" height="4" fill="#F3F2F1" stroke="none" stroke-width="1" rx="0"/>
<path d="M1202.6 118.2 L1217.3 103.9 Q1220.3 102.3 1219.9 105.3 L1206.6 121.1 Z" fill="#F0F0F0" stroke="#9A9A9A" stroke-width="1.1"/>
<path d="M1202.6 118.2 Q1199.5 118.5 1198 122 Q1196.5 124.5 1191.5 124.4 Q1195 127.5 1200 127 Q1206 126.5 1206.6 121.1 Z" fill="#D4D4D4" stroke="#9A9A9A" stroke-width="1.1"/>
<text x="1182.5" y="145.7" font-size="14.8" fill="#A19F9D" font-weight="normal" text-anchor="start" textLength="36.5" lengthAdjust="spacingAndGlyphs">Quick</text>
<text x="1174.6" y="165.8" font-size="14.8" fill="#A19F9D" font-weight="normal" text-anchor="start" textLength="36.8" lengthAdjust="spacingAndGlyphs">Styles</text>
<path d="M1217.25 157.75 L1220.5 161.25 L1223.75 157.75" fill="none" stroke="#A19F9D" stroke-width="1.1"/>
<path d="M1236.2 96.4 L1243.5 88.9 L1249 94.3 L1241.5 101.8 Z" fill="#EDEDED" stroke="#A19F9D" stroke-width="1.1"/>
<path d="M1243.5 88.9 Q1245.5 88.2 1245.3 90.5 V95" fill="none" stroke="#A19F9D" stroke-width="1.2"/>
<path d="M1248.8 93 Q1250.8 93.5 1250.3 96 V100.5" fill="none" stroke="#A19F9D" stroke-width="1.5"/>
<rect x="1233.1" y="103" width="19.8" height="4.9" fill="#B3AFAB" stroke="none" stroke-width="1" rx="0"/>
<text x="1257.5" y="104.2" font-size="14.8" fill="#A19F9D" font-weight="normal" text-anchor="start" textLength="63.3" lengthAdjust="spacingAndGlyphs">Shape Fill</text>
<path d="M1326.25 95.75 L1329.5 99.25 L1332.75 95.75" fill="none" stroke="#A19F9D" stroke-width="1.1"/>
<path d="M1235.3 130 V118.8 H1245.6" fill="none" stroke="#A19F9D" stroke-width="1.3"/>
<path d="M1239.4 130.4 L1240.6 126.5 L1250 117.5 Q1251.7 116.5 1252.4 118.2 Q1252.8 119.5 1251.5 120.5 L1242.6 129.3 Z M1241 126.5 L1242.4 128.7" fill="#EDEDED" stroke="#A19F9D" stroke-width="1.1"/>
<rect x="1233.1" y="132" width="19.8" height="4.9" fill="#B3AFAB" stroke="none" stroke-width="1" rx="0"/>
<text x="1257.5" y="133" font-size="14.8" fill="#A19F9D" font-weight="normal" text-anchor="start" textLength="92.2" lengthAdjust="spacingAndGlyphs">Shape Outline</text>
<path d="M1355.05 124.75 L1358.3 128.25 L1361.55 124.75" fill="none" stroke="#A19F9D" stroke-width="1.1"/>
<path d="M1233.8 157.4 L1238.6 148.6 H1249.3 L1252.5 153.3 L1247.6 162.3 H1237.8 Z" fill="#C8C8C8" stroke="#A19F9D" stroke-width="1.2"/>
<path d="M1233.8 157.4 L1238.6 148.6 H1249.3 L1244.5 157.4 Z" fill="#EDEDED" stroke="#A19F9D" stroke-width="1.1"/>
<path d="M1244.5 157.4 L1249.3 148.6 L1252.5 153.3 L1247.6 162.3 Z" fill="#DADADA" stroke="#A19F9D" stroke-width="1.1"/>
<text x="1257.5" y="162" font-size="14.8" fill="#A19F9D" font-weight="normal" text-anchor="start" textLength="88.3" lengthAdjust="spacingAndGlyphs">Shape Effects</text>
<path d="M1351.05 153.75 L1354.3 157.25 L1357.55 153.75" fill="none" stroke="#A19F9D" stroke-width="1.1"/>
<circle cx="1407.3" cy="95.3" r="6.3" fill="none" stroke="#3B3A39" stroke-width="1.3"/>
<line x1="1402.5" y1="100" x2="1395.5" y2="107" stroke="#3B3A39" stroke-width="1.4"/>
<text x="1418.5" y="104.2" font-size="14.8" fill="#323130" font-weight="normal" text-anchor="start" textLength="26.5" lengthAdjust="spacingAndGlyphs">Find</text>
<text x="1400.5" y="127" font-size="13.5" fill="#B146C2" font-weight="normal" text-anchor="start" textLength="7.5" lengthAdjust="spacingAndGlyphs">b</text>
<text x="1405.5" y="136.8" font-size="12.5" fill="#2D8CDB" font-weight="normal" text-anchor="start" textLength="7" lengthAdjust="spacingAndGlyphs">c</text>
<path d="M1397 123.5 Q1393.5 128 1396.5 131.5 Q1398.5 133.3 1403.5 132.3 M1401 129.5 L1403.8 132.3 L1401 135" fill="none" stroke="#2D8CDB" stroke-width="1.3"/>
<text x="1418.5" y="133" font-size="14.8" fill="#323130" font-weight="normal" text-anchor="start" textLength="52.5" lengthAdjust="spacingAndGlyphs">Replace</text>
<path d="M1485.0 125.55 L1488.5 129.05 L1492.0 125.55" fill="none" stroke="#444" stroke-width="1.2"/>
<path d="M1396.5 147 V163.5 L1400.5 159.5 L1403.5 165.5 L1406 164.3 L1403 158 H1409 Z" fill="#FFFFFF" stroke="#3B3A39" stroke-width="1.2"/>
<text x="1418.5" y="162" font-size="14.8" fill="#323130" font-weight="normal" text-anchor="start" textLength="39" lengthAdjust="spacingAndGlyphs">Select</text>
<path d="M1463.0 154.05 L1466.5 157.55 L1470.0 154.05" fill="none" stroke="#444" stroke-width="1.2"/>
<rect x="1538.5" y="89" width="15" height="27" fill="#7CB8EA" stroke="#1E78C8" stroke-width="1.5" rx="7.5"/>
<path d="M1534.5 108 Q1534.5 120.5 1546 120.5 Q1557.5 120.5 1557.5 108 M1546 120.5 V126.5" fill="none" stroke="#444" stroke-width="1.5"/>
<text x="1522.5" y="145.9" font-size="14.8" fill="#323130" font-weight="normal" text-anchor="start" textLength="47.4" lengthAdjust="spacingAndGlyphs">Dictate</text>
<path d="M1541.8 157.55 L1545.3 161.05 L1548.8 157.55" fill="none" stroke="#444" stroke-width="1.2"/>
<rect x="1604" y="91" width="34" height="34" fill="none" stroke="#D35230" stroke-width="1.8" rx="0"/>
<rect x="1608" y="95" width="11.5" height="11.5" fill="none" stroke="#D35230" stroke-width="1.5" rx="0"/>
<rect x="1622.5" y="95" width="11.5" height="11.5" fill="none" stroke="#D35230" stroke-width="1.5" rx="0"/>
<rect x="1608" y="109.5" width="11.5" height="11.5" fill="none" stroke="#D35230" stroke-width="1.5" rx="0"/>
<rect x="1622.5" y="109.5" width="11.5" height="11.5" fill="none" stroke="#D35230" stroke-width="1.5" rx="0"/>
<text x="1595.4" y="145.9" font-size="14.8" fill="#323130" font-weight="normal" text-anchor="start" textLength="51.6" lengthAdjust="spacingAndGlyphs">Add-ins</text>
<rect x="1684.7" y="94.3" width="34.5" height="27.1" fill="#F8F8F8" stroke="#7A7A7A" stroke-width="1.6" rx="0"/>
<rect x="1686.9" y="97.1" width="30" height="22" fill="none" stroke="#4A4A4A" stroke-width="1" rx="0"/>
<path d="M1694.6 103.3 H1716.5 M1709.4 103.3 V118.7" fill="none" stroke="#4A4A4A" stroke-width="1"/>
<path d="M1698 88.3 H1690.2 L1682.5 101.7 H1689.1 L1682.5 112.6 L1697.9 97.3 H1691.9 Z" fill="#F6D27A" stroke="#E8891F" stroke-width="1.1"/>
<text x="1672.5" y="145.9" font-size="14.8" fill="#323130" font-weight="normal" text-anchor="start" textLength="58.3" lengthAdjust="spacingAndGlyphs">Designer</text>
<text x="15" y="1011.7" font-size="13" fill="#555352" font-weight="normal" text-anchor="start" textLength="65" lengthAdjust="spacingAndGlyphs">Slide 1 of 1</text>
<path d="M110 1013.8 H105.8 V1000 H111.3 Q113.5 1000 113.5 1002.3 V1011 M113.5 1002.3 Q113.5 1000 115.7 1000 H121.3 V1008.5" fill="none" stroke="#555352" stroke-width="1.2"/>
<path d="M111 1011.8 L114.5 1015.3 L122 1007.8" fill="none" stroke="#555352" stroke-width="1.2"/>
<text x="145" y="1011.7" font-size="13" fill="#555352" font-weight="normal" text-anchor="start" textLength="80.7" lengthAdjust="spacingAndGlyphs">English (India)</text>
<circle cx="320.8" cy="1000.6" r="2.1" fill="none" stroke="#404040" stroke-width="1.1"/>
<path d="M313.5 1002.5 Q314.5 1001 316 1002 Q318 1004.5 320.8 1004.5 Q323.5 1004.5 325.5 1002 Q327 1001 328 1002.5 Q327 1004.5 324 1006 L322.5 1008.5 M318.5 1005.5 L317.5 1011 L316.5 1015.5 M317.8 1009.5 Q320 1009.8 321 1011.5" fill="none" stroke="#404040" stroke-width="1.1"/>
<path d="M323.5 1008.5 L330.5 1015.5 M330.5 1008.5 L323.5 1015.5" fill="none" stroke="#404040" stroke-width="1.1"/>
<text x="335" y="1011.8" font-size="13" fill="#3A3A3A" font-weight="bold" text-anchor="start" textLength="151.7" lengthAdjust="spacingAndGlyphs">Accessibility: Investigate</text>
<path d="M1400 1001.5 L1404 997.5 L1408 1001.5" fill="none" stroke="#484644" stroke-width="1.2"/>
<line x1="1394" y1="1006.3" x2="1414" y2="1006.3" stroke="#484644" stroke-width="1.1"/>
<line x1="1394" y1="1011" x2="1414" y2="1011" stroke="#484644" stroke-width="1.1"/>
<line x1="1394" y1="1015.5" x2="1414" y2="1015.5" stroke="#9A9A9A" stroke-width="1.1"/>
<text x="1416.5" y="1012" font-size="13" fill="#484644" font-weight="normal" text-anchor="start" textLength="34" lengthAdjust="spacingAndGlyphs">Notes</text>
<rect x="1475.5" y="994" width="49.5" height="22" fill="#D2D0CE" stroke="none" stroke-width="1" rx="0"/>
<rect x="1491.5" y="999.5" width="17" height="14.5" fill="none" stroke="#5A5A5A" stroke-width="1.4" rx="0"/>
<path d="M1494.5 1000 V1013.5 M1494.5 1010.5 H1508 M1498 1003 H1505 V1006.5 H1498 Z" fill="none" stroke="#5A5A5A" stroke-width="1.1"/>
<rect x="1541.8" y="1000" width="6.4" height="4.8" fill="none" stroke="#5A5A5A" stroke-width="1.5" rx="0.5"/>
<rect x="1552" y="1000" width="6.4" height="4.8" fill="none" stroke="#5A5A5A" stroke-width="1.5" rx="0.5"/>
<rect x="1541.8" y="1009.2" width="6.4" height="4.8" fill="none" stroke="#5A5A5A" stroke-width="1.5" rx="0.5"/>
<rect x="1552" y="1009.2" width="6.4" height="4.8" fill="none" stroke="#5A5A5A" stroke-width="1.5" rx="0.5"/>
<path d="M1591.5 999 H1599 Q1599.5 1000 1599.5 1000.5 Q1599.5 1000 1600 999 H1607.5 V1013.5 H1600.5 L1599.5 1014.5 L1598.5 1013.5 H1591.5 Z M1599.5 1000.5 V1014" fill="none" stroke="#555352" stroke-width="1.3"/>
<line x1="1593.8" y1="1002.4" x2="1597.8" y2="1002.4" stroke="#8A8886" stroke-width="1.2"/>
<line x1="1601.3" y1="1002.4" x2="1605.3" y2="1002.4" stroke="#8A8886" stroke-width="1.2"/>
<line x1="1593.8" y1="1005" x2="1597.8" y2="1005" stroke="#8A8886" stroke-width="1.2"/>
<line x1="1601.3" y1="1005" x2="1605.3" y2="1005" stroke="#8A8886" stroke-width="1.2"/>
<line x1="1593.8" y1="1007.7" x2="1597.8" y2="1007.7" stroke="#8A8886" stroke-width="1.2"/>
<line x1="1601.3" y1="1007.7" x2="1605.3" y2="1007.7" stroke="#8A8886" stroke-width="1.2"/>
<line x1="1593.8" y1="1010.2" x2="1597.8" y2="1010.2" stroke="#8A8886" stroke-width="1.2"/>
<line x1="1601.3" y1="1010.2" x2="1605.3" y2="1010.2" stroke="#8A8886" stroke-width="1.2"/>
<path d="M1641 998.8 H1657.5 M1642.5 998.8 V1007.3 H1656 V998.8 M1649.2 1007.3 V1013.5 M1645 1013.7 H1653.5 M1646.2 1002.4 H1653" fill="none" stroke="#555352" stroke-width="1.3"/>
<line x1="1682" y1="1006.6" x2="1691.5" y2="1006.6" stroke="#484644" stroke-width="1.1"/>
<line x1="1698" y1="1007" x2="1822.6" y2="1007" stroke="#5A5A5A" stroke-width="1"/>
<rect x="1748.3" y="999.8" width="5.5" height="14" fill="#3B3A39" stroke="none" stroke-width="1" rx="0"/>
<line x1="1760.5" y1="1003.5" x2="1760.5" y2="1010.5" stroke="#5A5A5A" stroke-width="1"/>
<path d="M1828.5 1007 H1838.5 M1833.5 1002 V1012" fill="none" stroke="#484644" stroke-width="1.1"/>
<text x="1854.3" y="1012.5" font-size="13" fill="#484644" font-weight="normal" text-anchor="start" textLength="23.7" lengthAdjust="spacingAndGlyphs">85%</text>
<path d="M1900 1002.5 H1908.5 V1011.5 H1900 Z M1901.5 999.5 L1904.3 997 L1907 999.5 M1901.5 1014 L1904.3 1016.5 L1907 1014 M1898 1004.3 L1895.5 1007 L1898 1009.7 M1910.5 1004.3 L1913 1007 L1910.5 1009.7" fill="none" stroke="#484644" stroke-width="1.1"/>
</svg>
</body></html>
